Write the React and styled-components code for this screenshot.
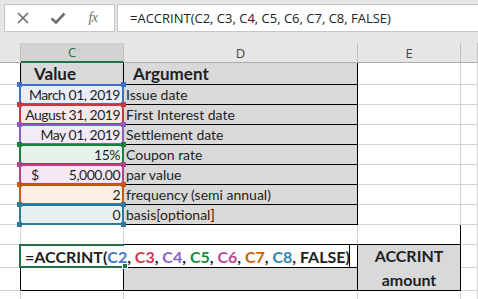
import React from "react";
import styled, { createGlobalStyle } from "styled-components";

const GlobalStyle = createGlobalStyle`
  html, body { margin: 0; padding: 0; background: #fff; }
  body { font-family: Lato, "Noto Sans", sans-serif; overflow: hidden; }
`;

const GRID = "#d4d4d4";
const COLS = "21px 103px 234px 103px 1fr";

const Window = styled.div`
  width: 478px;
  height: 299px;
  overflow: hidden;
  background: #fff;
`;

const FormulaBar = styled.div`
  display: flex;
  gap: 2px;
  padding: 4px 0 11px 4px;
  background: #e6e6e6;
`;

const ButtonBox = styled.div`
  width: 111px;
  height: 28px;
  box-sizing: border-box;
  border: 1px solid #c6c6c6;
  background: #fff;
  display: flex;
  align-items: center;
  padding-left: 10px;
  gap: 19px;
`;

const IconSlot = styled.span`
  width: 16px;
  height: 16px;
  display: flex;
  align-items: center;
  justify-content: center;
  color: #6e6e6e;
`;

const Fx = styled.span`
  font-family: "Liberation Serif", serif;
  font-style: italic;
  font-size: 14px;
  color: #6a6a6a;
  letter-spacing: -0.5px;
`;

const FormulaInput = styled.div`
  flex: 1;
  height: 28px;
  box-sizing: border-box;
  border: 1px solid #c6c6c6;
  border-right: none;
  background: #fff;
  display: flex;
  align-items: center;
  padding-left: 12px;
  font-family: "Open Sans", sans-serif;
  font-size: 13px;
  color: #222;
`;

const HeaderRow = styled.div`
  display: grid;
  grid-template-columns: ${COLS};
  height: 20px;
  background: #e6e6e6;
`;

const ColHead = styled.div`
  box-sizing: border-box;
  border-right: 1px solid #c0c0c0;
  border-bottom: ${(p) => (p.$active ? "2px solid #217346" : "1px solid #ababab")};
  background: ${(p) => (p.$active ? "#d2d2d2" : "#e6e6e6")};
  color: ${(p) => (p.$active ? "#217346" : "#444")};
  font-family: "Open Sans", sans-serif;
  font-size: 13px;
  display: flex;
  align-items: center;
  justify-content: center;
`;

const Sheet = styled.div`
  display: grid;
  grid-template-columns: ${COLS};
  grid-template-rows: 22px repeat(8, 20px) 23px 23px 20px;
  font-size: 14px;
  color: #1e1e1e;
`;

const Cell = styled.div`
  position: relative;
  box-sizing: border-box;
  border-right: 1px solid ${(p) => p.$r || GRID};
  border-bottom: 1px solid ${(p) => p.$b || GRID};
  background: ${(p) => p.$bg || "#fff"};
  display: flex;
  align-items: center;
  justify-content: ${(p) => (p.$align === "right" ? "flex-end" : p.$align === "center" ? "center" : "flex-start")};
  padding: 0 ${(p) => (p.$align === "right" ? "3px" : "0")} 0 ${(p) => p.$pl || "2px"};
  font-weight: ${(p) => (p.$bold ? 700 : 400)};
  font-size: ${(p) => p.$size || "14px"};
  letter-spacing: ${(p) => p.$ls || "normal"};
  white-space: nowrap;
  grid-row: ${(p) => p.$rows || "auto"};
`;

const Highlight = styled.div`
  position: absolute;
  top: -1px;
  left: -2px;
  right: -1px;
  bottom: -1px;
  border: 2px solid ${(p) => p.$color};
  pointer-events: none;
  z-index: 2;
`;

const Handle = styled.span`
  position: absolute;
  width: 5px;
  height: 5px;
  background: ${(p) => p.$color};
  ${(p) => (p.$top ? "top: -4px;" : "bottom: -4px;")}
  ${(p) => (p.$left ? "left: -4px;" : "right: -4px;")}
`;

const Dollar = styled.span`
  margin-right: auto;
  padding-left: 8px;
`;

const Editor = styled.div`
  position: absolute;
  top: -1px;
  left: -2px;
  width: 331px;
  bottom: -1px;
  box-sizing: border-box;
  border: 1px solid #000;
  background: #fff;
  z-index: 3;
  display: flex;
  align-items: center;
  padding-left: 5px;
  font-weight: 700;
  font-size: 16px;
  color: #1e1e1e;
`;

const ActiveFrame = styled.div`
  position: absolute;
  top: -1px;
  left: -2px;
  right: -1px;
  bottom: -1px;
  border: 2px solid #217346;
  border-right: none;
  z-index: 4;
  pointer-events: none;
`;

const FillHandle = styled.span`
  position: absolute;
  right: -4px;
  bottom: -3px;
  width: 4px;
  height: 4px;
  background: #217346;
  border: 1px solid #fff;
`;

const Ref = styled.span`
  color: ${(p) => p.$color};
`;

const AmountLabel = styled.div`
  text-align: center;
  line-height: 24px;
  font-weight: 700;
  font-size: 16px;
  color: #1e1e1e;
`;

const rows = [
  { value: "March 01, 2019", arg: "Issue date", color: "#3f6fc6", bg: "#e9eef8", ref: "#4475c9" },
  { value: "August 31, 2019", arg: "First Interest date", color: "#c33a45", bg: "#f9e8ea", ref: "#cf3a4a" },
  { value: "May 01, 2019", arg: "Settlement date", color: "#8a5cc2", bg: "#f1ecf8", ref: "#8e63c9" },
  { value: "15%", arg: "Coupon rate", color: "#17803b", bg: "#e7f3ea", ref: "#1b8a3c" },
  { value: "5,000.00", arg: "par value", color: "#b3428e", bg: "#f6e8f2", ref: "#b84797", money: true },
  { value: "2", arg: "frequency (semi annual)", color: "#c45a12", bg: "#fbefe6", ref: "#c8600f" },
  { value: "0", arg: "basis[optional]", color: "#2e7b99", bg: "#e9f0f3", ref: "#2f86a8" },
];

const Cross = () => (
  <svg width="14" height="14" viewBox="0 0 14 14">
    <path d="M2 2 L12 12 M12 2 L2 12" stroke="#6e6e6e" strokeWidth="1.6" fill="none" />
  </svg>
);

const Check = () => (
  <svg width="16" height="14" viewBox="0 0 16 14">
    <path d="M1.5 7.5 L6 11.5 L14.5 2.5" stroke="#6e6e6e" strokeWidth="2.6" fill="none" />
  </svg>
);

export default function App() {
  return (
    <Window>
      <GlobalStyle />
      <FormulaBar>
        <ButtonBox>
          <IconSlot><Cross /></IconSlot>
          <IconSlot><Check /></IconSlot>
          <IconSlot><Fx>fx</Fx></IconSlot>
        </ButtonBox>
        <FormulaInput>=ACCRINT(C2, C3, C4, C5, C6, C7, C8, FALSE)</FormulaInput>
      </FormulaBar>

      <HeaderRow>
        <ColHead />
        <ColHead $active>C</ColHead>
        <ColHead>D</ColHead>
        <ColHead>E</ColHead>
        <ColHead />
      </HeaderRow>

      <Sheet>
        {/* row 1 */}
        <Cell $r="#000" />
        <Cell $r="#000" $b="#000" $bg="#d9d9d9" $bold $size="17px" $pl="13px">Value</Cell>
        <Cell $r="#000" $b="#000" $bg="#d9d9d9" $bold $size="17px" $pl="9px">Argument</Cell>
        <Cell />
        <Cell />

        {rows.map((r) => (
          <React.Fragment key={r.arg}>
            <Cell $r="#000" />
            <Cell $r="#000" $b="#000" $bg={r.bg} $align="right" $ls="-0.5px">
              {r.money && <Dollar>$</Dollar>}
              {r.value}
              <Highlight $color={r.color}>
                <Handle $color={r.color} $top $left />
                <Handle $color={r.color} $top />
                <Handle $color={r.color} $left />
                <Handle $color={r.color} />
              </Highlight>
            </Cell>
            <Cell $r="#000" $b="#000" $bg="#d9d9d9">{r.arg}</Cell>
            <Cell />
            <Cell />
          </React.Fragment>
        ))}

        {/* row 9 */}
        <Cell />
        <Cell $b="#000" />
        <Cell $b="#000" />
        <Cell $b="#000" $r="#000" />
        <Cell />

        {/* row 10 */}
        <Cell $r="#000" />
        <Cell $r="#fff" $b="#000">
          <Editor>
            =ACCRINT(
            {rows.map((r, i) => (
              <React.Fragment key={i}>
                <Ref $color={r.ref}>C{i + 2}</Ref>,&nbsp;
              </React.Fragment>
            ))}
            FALSE)
          </Editor>
          <ActiveFrame>
            <FillHandle />
          </ActiveFrame>
        </Cell>
        <Cell $r="#000" $b="#000" />
        <Cell $r="#000" $b="#000" $bg="#d9d9d9" $rows="span 2" $align="center" $pl="0">
          <AmountLabel>
            ACCRINT
            <br />
            amount
          </AmountLabel>
        </Cell>
        <Cell />

        {/* row 11 */}
        <Cell $r="#000" />
        <Cell $r="#000" $b="#000" />
        <Cell $r="#000" $b="#000" $bg="#d9d9d9" />
        <Cell />

        {/* row 12 */}
        <Cell />
        <Cell />
        <Cell />
        <Cell />
        <Cell />
      </Sheet>
    </Window>
  );
}
